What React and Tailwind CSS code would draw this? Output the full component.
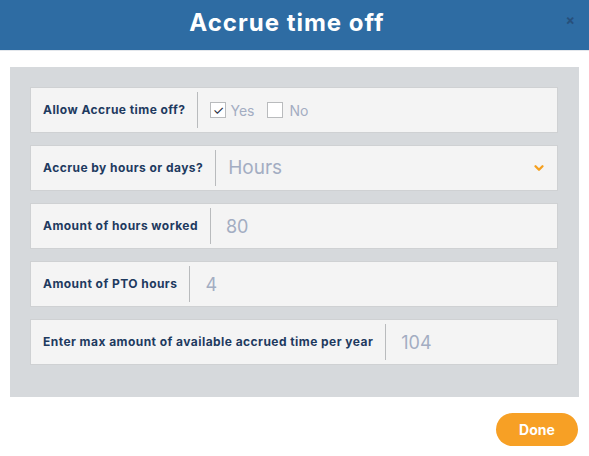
import { ChevronDown } from 'lucide-react';

const font = { fontFamily: 'Inter, "Open Sans", sans-serif' };

function Row({ label, children }) {
  return (
    <div className="flex h-[46px] items-center border border-[#cfd1d3] bg-[#f4f4f4]">
      <div className="flex h-full items-center py-1">
        <span className="pl-3 pr-3 text-[12px] font-bold tracking-[0.45px] text-[#1e3a5f]">{label}</span>
        <div className="h-full w-px bg-[#b9bbbd]" />
      </div>
      <div className="flex flex-1 items-center pl-[12px] pr-[11px]">{children}</div>
    </div>
  );
}

export default function App() {
  return (
    <div className="h-[456px] w-[589px] bg-white" style={font}>
      <header className="relative flex h-[51px] items-center justify-center border-b border-[#e3e7ec] bg-[#2e6ca3] pb-1 pr-[15px]">
        <h1 className="text-[24px] font-bold tracking-[1px] text-white">Accrue time off</h1>
        <span className="absolute right-[14px] top-[9px] text-[14px] font-bold text-[#27507c]">×</span>
      </header>
      <div className="mx-[10px] mt-4 flex h-[330px] flex-col gap-3 bg-[#d6d9dc] pl-5 pr-[21px] pt-5">
        <Row label="Allow Accrue time off?">
          <label className="flex items-center gap-[4px]">
            <span className="flex h-4 w-4 items-center justify-center border border-[#b9bbbd] bg-white text-[13px] leading-none text-[#1e2a3a]">✓</span>
            <span className="text-[14px] text-[#a3adc2]">Yes</span>
          </label>
          <label className="ml-[13px] flex items-center gap-[6px]">
            <span className="h-4 w-4 border border-[#b9bbbd] bg-white" />
            <span className="text-[14px] text-[#a3adc2]">No</span>
          </label>
        </Row>
        <Row label="Accrue by hours or days?">
          <span className="flex-1 text-[19px] text-[#a3adc2]">Hours</span>
          <ChevronDown className="h-[14px] w-[14px] text-[#f5a01f]" strokeWidth={4} />
        </Row>
        <Row label="Amount of hours worked">
          <span className="pl-[3px] text-[18px] text-[#a3adc2]">80</span>
        </Row>
        <Row label="Amount of PTO hours">
          <span className="pl-[3px] text-[18px] text-[#a3adc2]">4</span>
        </Row>
        <Row label="Enter max amount of available accrued time per year">
          <span className="pl-[3px] text-[18px] text-[#a3adc2]">104</span>
        </Row>
      </div>
      <div className="flex justify-end pr-[11px] pt-4">
        <button className="h-[33px] w-[82px] rounded-full bg-[#f7a025] text-[14px] font-bold text-white">Done</button>
      </div>
    </div>
  );
}
